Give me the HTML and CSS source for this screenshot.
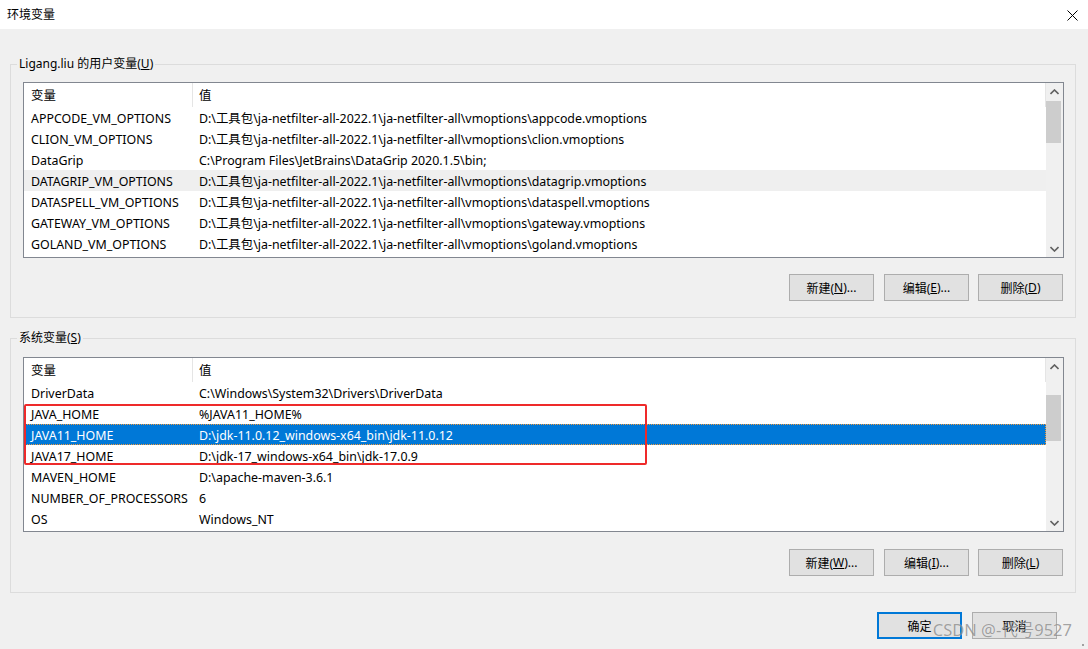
FILE: index.html
```html
<!DOCTYPE html>
<html lang="zh-CN">
<head>
    <meta charset="UTF-8">
    <title>环境变量</title>
    <link rel="stylesheet" href="styles.css">
</head>
<body>
    <div class="window">
        <div class="title-bar">
            <span class="title">环境变量</span>
            <svg class="close-icon" width="11" height="11" viewBox="0 0 11 11">
                <path d="M0.5 0.5 L10.5 10.5 M10.5 0.5 L0.5 10.5" stroke="#000" stroke-width="1" fill="none"/>
            </svg>
        </div>

        <div class="window-body">
            <fieldset class="group group-user">
                <legend>Ligang.liu 的用户变量(<u>U</u>)</legend>
                <div class="list" id="userList"></div>
                <div class="btn-row">
                    <a class="btn">新建(<u>N</u>)...</a>
                    <a class="btn">编辑(<u>E</u>)...</a>
                    <a class="btn">删除(<u>D</u>)</a>
                </div>
            </fieldset>

            <fieldset class="group group-system">
                <legend>系统变量(<u>S</u>)</legend>
                <div class="list" id="systemList"></div>
                <div class="btn-row">
                    <a class="btn">新建(<u>W</u>)...</a>
                    <a class="btn">编辑(<u>I</u>)...</a>
                    <a class="btn">删除(<u>L</u>)</a>
                </div>
            </fieldset>

            <div class="footer">
                <a class="btn btn-default">确定</a>
                <a class="btn">取消</a>
            </div>
        </div>

        <div class="watermark">CSDN @-代号9527</div>
        <div class="grip"></div>
    </div>

    <script>
    let user_vars = [
        {name: 'APPCODE_VM_OPTIONS', value: 'D:\\工具包\\ja-netfilter-all-2022.1\\ja-netfilter-all\\vmoptions\\appcode.vmoptions'},
        {name: 'CLION_VM_OPTIONS', value: 'D:\\工具包\\ja-netfilter-all-2022.1\\ja-netfilter-all\\vmoptions\\clion.vmoptions'},
        {name: 'DataGrip', value: 'C:\\Program Files\\JetBrains\\DataGrip 2020.1.5\\bin;'},
        {name: 'DATAGRIP_VM_OPTIONS', value: 'D:\\工具包\\ja-netfilter-all-2022.1\\ja-netfilter-all\\vmoptions\\datagrip.vmoptions', state: 'hover'},
        {name: 'DATASPELL_VM_OPTIONS', value: 'D:\\工具包\\ja-netfilter-all-2022.1\\ja-netfilter-all\\vmoptions\\dataspell.vmoptions'},
        {name: 'GATEWAY_VM_OPTIONS', value: 'D:\\工具包\\ja-netfilter-all-2022.1\\ja-netfilter-all\\vmoptions\\gateway.vmoptions'},
        {name: 'GOLAND_VM_OPTIONS', value: 'D:\\工具包\\ja-netfilter-all-2022.1\\ja-netfilter-all\\vmoptions\\goland.vmoptions'},
    ];

    let system_vars = [
        {name: 'DriverData', value: 'C:\\Windows\\System32\\Drivers\\DriverData'},
        {name: 'JAVA_HOME', value: '%JAVA11_HOME%'},
        {name: 'JAVA11_HOME', value: 'D:\\jdk-11.0.12_windows-x64_bin\\jdk-11.0.12', state: 'selected'},
        {name: 'JAVA17_HOME', value: 'D:\\jdk-17_windows-x64_bin\\jdk-17.0.9'},
        {name: 'MAVEN_HOME', value: 'D:\\apache-maven-3.6.1'},
        {name: 'NUMBER_OF_PROCESSORS', value: '6'},
        {name: 'OS', value: 'Windows_NT'},
    ];

    const chevron_up = '<svg width="9" height="6" viewBox="0 0 9 6"><path d="M0.5 5 L4.5 1 L8.5 5" stroke="#606060" stroke-width="1.6" fill="none"/></svg>';
    const chevron_down = '<svg width="9" height="6" viewBox="0 0 9 6"><path d="M0.5 1 L4.5 5 L8.5 1" stroke="#606060" stroke-width="1.6" fill="none"/></svg>';

    function load_list(wrapper_selector, data_array, thumb_top, thumb_height, marked) {
        let wrapper = document.querySelector(wrapper_selector);
        let rows = '';
        for (const item of data_array) {
            rows += `<div class="row ${item.state || ''}">
                        <span class="cell-name">${item.name}</span>
                        <span class="cell-value">${item.value}</span>
                    </div>`;
        }

        wrapper.innerHTML = `<div class="list-body">
                                <div class="row header">
                                    <span class="cell-name">变量</span>
                                    <span class="cell-value">值</span>
                                </div>
                                ${rows}
                                ${marked ? '<div class="marker"></div>' : ''}
                            </div>
                            <div class="scrollbar">
                                <span class="arrow">${chevron_up}</span>
                                <span class="track">
                                    <span class="thumb" style="margin-top: ${thumb_top}px; height: ${thumb_height}px;"></span>
                                </span>
                                <span class="arrow">${chevron_down}</span>
                            </div>`;
    }

    load_list('#userList', user_vars, 1, 42, false);
    load_list('#systemList', system_vars, 20, 46, true);
    </script>
</body>
</html>
```

FILE: styles.css
```css
* {
    box-sizing: border-box;
}

body {
    margin: 0;
    background-color: #f0f0f0;
    font-family: "Noto Sans", "Noto Sans CJK SC", sans-serif;
    font-size: 12px;
    color: #000;
}

.window {
    position: relative;
    height: 649px;
    overflow: hidden;
}

.title-bar {
    height: 29px;
    background: white;
    display: flex;
    align-items: center;
    justify-content: space-between;
    padding: 0 10px 2px 7px;
}

.close-icon {
    margin-top: 4px;
}

.window-body {
    padding: 27px 12px 0 10px;
}

.group {
    margin: 0;
    border: 1px solid #dcdcdc;
    padding: 10px 11px 16px 12px;
}

.group legend {
    margin-left: -6px;
    padding: 0 2px;
    line-height: 16px;
}

.group-user .list {
    height: 176px;
}

.group-system {
    margin-top: 12px;
    padding-top: 11px;
}

.group-system .btn-row {
    margin-top: 17px;
}

.list {
    display: flex;
    height: 175px;
    border: 1px solid #828790;
    background: white;
}

.list-body {
    position: relative;
    flex: 1;
    overflow: hidden;
}

.row {
    display: grid;
    grid-template-columns: 169px 1fr;
    height: 21px;
    line-height: 21px;
    padding-top: 1px;
    white-space: nowrap;
    font-size: 12.4px;
}

.row .cell-name {
    padding-left: 7px;
}

.row .cell-value {
    padding-left: 6px;
}

.row.header {
    height: 24px;
    line-height: 22px;
    padding-top: 2px;
    border-right: 1px solid #e5e5e5;
}

.row.header .cell-name {
    border-right: 1px solid #e5e5e5;
    margin-top: -2px;
    padding-top: 2px;
}

.row.hover {
    background: #efefef;
}

.row.selected {
    background: #0078d7;
    color: white;
    outline: 1px dotted #f39a3c;
    outline-offset: -1px;
}

.marker {
    position: absolute;
    left: 0;
    top: 46px;
    width: 623px;
    height: 61px;
    border: 2px solid #ee2a2a;
    border-radius: 2px;
}

.scrollbar {
    width: 17px;
    background: #f0f0f0;
    display: flex;
    flex-direction: column;
}

.scrollbar .arrow {
    height: 17px;
    display: flex;
    align-items: center;
    justify-content: center;
}

.scrollbar .track {
    flex: 1;
    display: flex;
    flex-direction: column;
}

.scrollbar .thumb {
    display: block;
    width: 15px;
    background: #cdcdcd;
}

.btn-row {
    display: flex;
    justify-content: flex-end;
    gap: 9px;
    margin-top: 16px;
    margin-right: 1px;
}

.btn-row .btn:first-child {
    margin-right: 1px;
}

.btn {
    display: flex;
    align-items: center;
    justify-content: center;
    width: 85px;
    height: 27px;
    background: #e1e1e1;
    border: 1px solid #adadad;
    cursor: pointer;
}

.footer {
    display: flex;
    justify-content: flex-end;
    gap: 10px;
    margin-top: 19px;
    padding-right: 19px;
}

.btn-default {
    border: 2px solid #0078d7;
}

.watermark {
    position: absolute;
    right: 16px;
    bottom: 8px;
    font-size: 16.5px;
    color: rgba(90, 90, 90, 0.55);
    text-shadow: 0 0 1px rgba(255, 255, 255, 0.6);
}

.grip {
    position: absolute;
    right: 4px;
    bottom: 3px;
    width: 2px;
    height: 2px;
    background: #a0a0a0;
}
```
